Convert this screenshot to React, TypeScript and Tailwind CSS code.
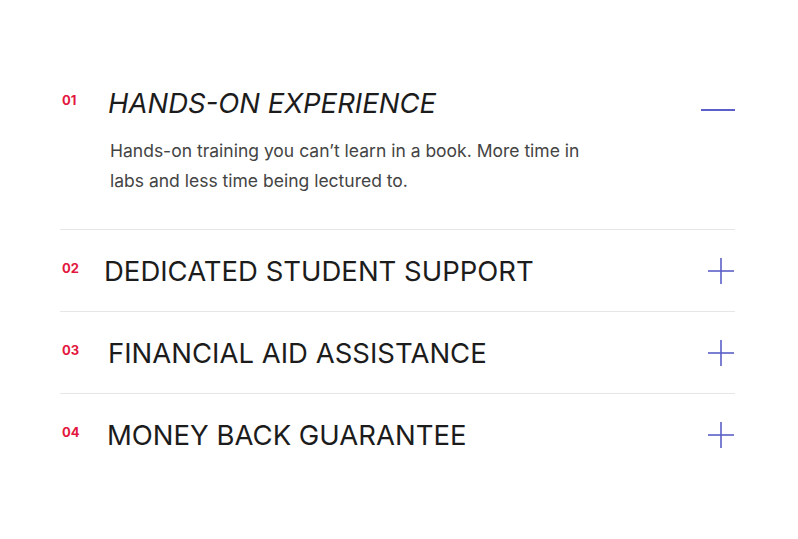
import { useState } from "react";

const items = [
  {
    num: "01",
    title: "HANDS-ON EXPERIENCE",
    body: "Hands-on training you can’t learn in a book. More time in labs and less time being lectured to.",
    shift: "ml-0",
  },
  { num: "02", title: "DEDICATED STUDENT SUPPORT", body: "", shift: "-ml-[4px]" },
  { num: "03", title: "FINANCIAL AID ASSISTANCE", body: "", shift: "ml-0" },
  { num: "04", title: "MONEY BACK GUARANTEE", body: "", shift: "-ml-[1px]" },
];

function Toggle({ open }: { open: boolean }) {
  if (open) {
    return (
      <svg width="34" height="4" viewBox="0 0 34 4" className="mt-[13px]">
        <line x1="0" y1="2" x2="34" y2="2" stroke="#5b5fc7" strokeWidth="2" />
      </svg>
    );
  }
  return (
    <svg width="26" height="26" viewBox="0 0 26 26" className="mr-[1px]">
      <line x1="0" y1="13" x2="26" y2="13" stroke="#5b5fc7" strokeWidth="1.6" />
      <line x1="13" y1="0" x2="13" y2="26" stroke="#5b5fc7" strokeWidth="1.6" />
    </svg>
  );
}

export default function App() {
  const [open, setOpen] = useState(0);

  return (
    <div className="w-[798px] h-[539px] bg-white font-['Inter',sans-serif] overflow-hidden">
      <div className="ml-[60px] w-[675px] pt-[62px]">
        {items.map((item, i) => {
          const isOpen = open === i;
          return (
            <div
              key={item.num}
              className={`${i > 0 ? "border-t border-[#e6e6e6]" : ""} ${
                isOpen ? "pt-[27px] pb-[33px]" : "pt-[27px] pb-[26px]"
              }`}
            >
              <button
                onClick={() => setOpen(isOpen ? -1 : i)}
                className="w-full flex items-start text-left"
              >
                <span className="w-[48px] pl-[2px] pt-[4px] text-[13px] leading-[14px] font-bold text-[#e3173e]">
                  {item.num}
                </span>
                <span
                  className={`${item.shift} flex-1 text-[27.5px] leading-[28px] tracking-normal text-[#1c1c1c] ${
                    isOpen ? "italic" : ""
                  }`}
                >
                  {item.title}
                </span>
                <span className="flex items-center justify-end h-[28px] w-[40px]">
                  <Toggle open={isOpen} />
                </span>
              </button>
              {isOpen && item.body && (
                <p className="ml-[50px] mt-[19px] w-[490px] text-[17.5px] leading-[30px] text-[#444]">
                  {item.body}
                </p>
              )}
            </div>
          );
        })}
      </div>
    </div>
  );
}
